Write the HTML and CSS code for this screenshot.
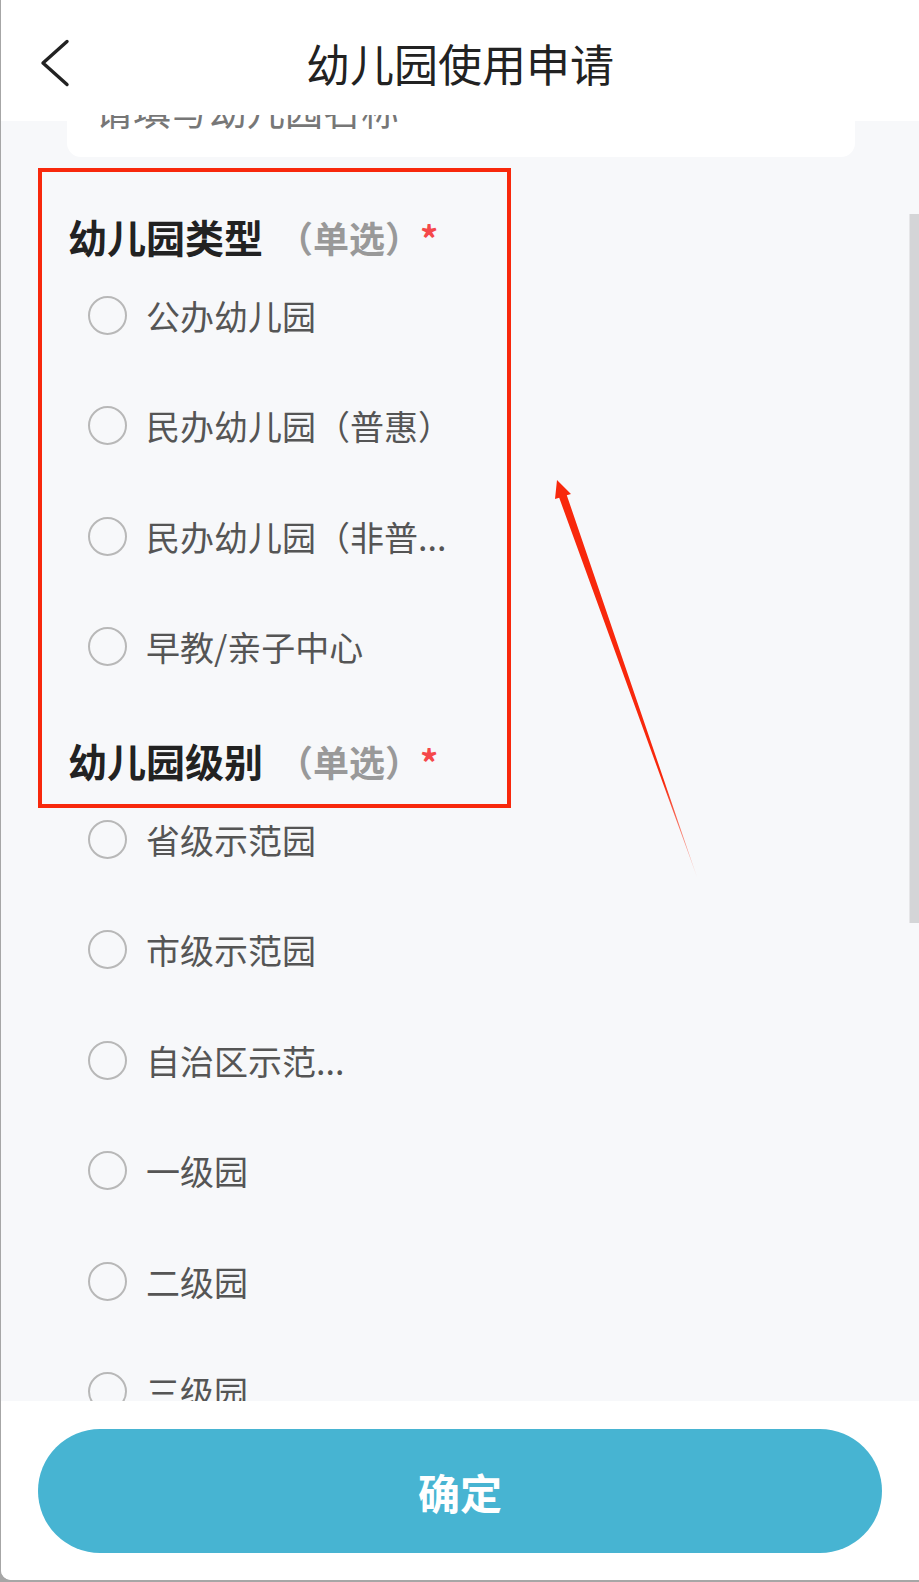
FILE: index.html
```html
<!DOCTYPE html>
<html lang="zh-CN">
<head>
  <meta charset="UTF-8">
  <meta name="viewport" content="width=device-width, initial-scale=1.0">
  <title>幼儿园使用申请</title>
  <link rel="stylesheet" href="styles.css">
</head>
<body>
  <div class="app">
    <header class="topbar">
      <a class="back" href="#">
        <svg width="32" height="48" viewBox="0 0 32 48">
          <path d="M28 2.5 L4 24 L28 45.5" fill="none" stroke="#222" stroke-width="3.4" stroke-linecap="round" stroke-linejoin="round"/>
        </svg>
      </a>
      <h1>幼儿园使用申请</h1>
    </header>

    <main class="scroll">
      <div class="scroll-inner">
        <div class="name-card">请填写幼儿园名称</div>

        <section class="group">
          <h2 class="group-title">幼儿园类型<span class="hint">（单选）</span><span class="req">*</span></h2>
          <label class="option"><span class="radio"></span>公办幼儿园</label>
          <label class="option"><span class="radio"></span>民办幼儿园（普惠）</label>
          <label class="option"><span class="radio"></span>民办幼儿园（非普...</label>
          <label class="option"><span class="radio"></span>早教/亲子中心</label>
        </section>

        <section class="group">
          <h2 class="group-title">幼儿园级别<span class="hint">（单选）</span><span class="req">*</span></h2>
          <label class="option"><span class="radio"></span>省级示范园</label>
          <label class="option"><span class="radio"></span>市级示范园</label>
          <label class="option"><span class="radio"></span>自治区示范...</label>
          <label class="option"><span class="radio"></span>一级园</label>
          <label class="option"><span class="radio"></span>二级园</label>
          <label class="option"><span class="radio"></span>三级园</label>
        </section>
      </div>
    </main>

    <div class="scrollbar"></div>

    <footer class="bottom">
      <button class="btn-ok" type="button">确定</button>
    </footer>
  </div>

  <!-- annotation -->
  <div class="mark-box"></div>
  <svg class="mark-arrow" width="919" height="1582" viewBox="0 0 919 1582">
    <defs>
      <linearGradient id="fade" gradientUnits="userSpaceOnUse" x1="563" y1="496" x2="697" y2="877">
        <stop offset="0" stop-color="#f8280c"/>
        <stop offset="0.75" stop-color="#f8280c"/>
        <stop offset="1" stop-color="#f8280c" stop-opacity="0.2"/>
      </linearGradient>
    </defs>
    <polygon points="557,480 571,494 566.8,495.2 697,877 559.2,497.8 555,499" fill="url(#fade)"/>
  </svg>
</body>
</html>
```

FILE: styles.css
```css
* {
  box-sizing: border-box;
  margin: 0;
  padding: 0;
}

body {
  position: relative;
  width: 919px;
  height: 1582px;
  overflow: hidden;
  background: #a6a6a6;
  font-family: "Noto Sans CJK SC", "Noto Sans", sans-serif;
}

.app {
  position: relative;
  display: flex;
  flex-direction: column;
  width: 918px;
  height: 1580px;
  margin-left: 1px;
  background: #fff;
  border-bottom-left-radius: 10px;
  overflow: hidden;
}

/* top bar */
.topbar {
  flex-shrink: 0;
  display: grid;
  grid-template-columns: 1fr auto 1fr;
  align-items: center;
  height: 115px;
  padding-top: 11px;
  background: #fff;
}

.back {
  display: flex;
  width: 32px;
  margin-left: 38px;
}

.topbar h1 {
  font-size: 44px;
  font-weight: normal;
  line-height: 60px;
  color: #222;
}

/* scrolling form */
.scroll {
  flex: 1;
  overflow: hidden;
  background: linear-gradient(#fff 6px, #f7f8fa 6px);
}

.scroll-inner {
  margin-top: -54px;
}

.name-card {
  margin: 0 64px 0 66px;
  padding: 24px 28px;
  background: #fff;
  border-radius: 14px;
  font-size: 38px;
  line-height: 48px;
  color: #777;
}

.group {
  margin-top: 34px;
  padding-left: 67px;
}

.name-card + .group {
  margin-top: 55px;
}

.group-title {
  height: 48px;
  font-size: 39px;
  font-weight: bold;
  line-height: 48px;
  color: #222;
}

.group-title .hint {
  margin-left: 14px;
  font-size: 36px;
  color: #999;
}

.group-title .req {
  margin-left: -1px;
  font-size: 36px;
  color: #f5484a;
}

.option {
  display: flex;
  align-items: center;
  height: 110.5px;
  padding-left: 20px;
  font-size: 34px;
  color: #555;
}

.radio {
  flex-shrink: 0;
  width: 39px;
  height: 39px;
  margin-right: 19px;
  border: 2.5px solid #b8b8b8;
  border-radius: 50%;
}

.scrollbar {
  position: absolute;
  right: 0;
  top: 214px;
  width: 10px;
  height: 709px;
  background: #d4d5d7;
  border-left: 1px solid #e6e6e8;
}

/* bottom */
.bottom {
  flex-shrink: 0;
  height: 179px;
  padding: 28px 37px 0;
  background: #fff;
}

.btn-ok {
  width: 100%;
  height: 124px;
  border: none;
  border-radius: 62px;
  background: #47b4d2;
  color: #fff;
  font-family: inherit;
  font-size: 42px;
  font-weight: bold;
}

/* annotation */
.mark-box {
  position: absolute;
  left: 38px;
  top: 168px;
  width: 473px;
  height: 640px;
  border: 4px solid #f8280c;
}

.mark-arrow {
  position: absolute;
  left: 0;
  top: 0;
  pointer-events: none;
}
```
